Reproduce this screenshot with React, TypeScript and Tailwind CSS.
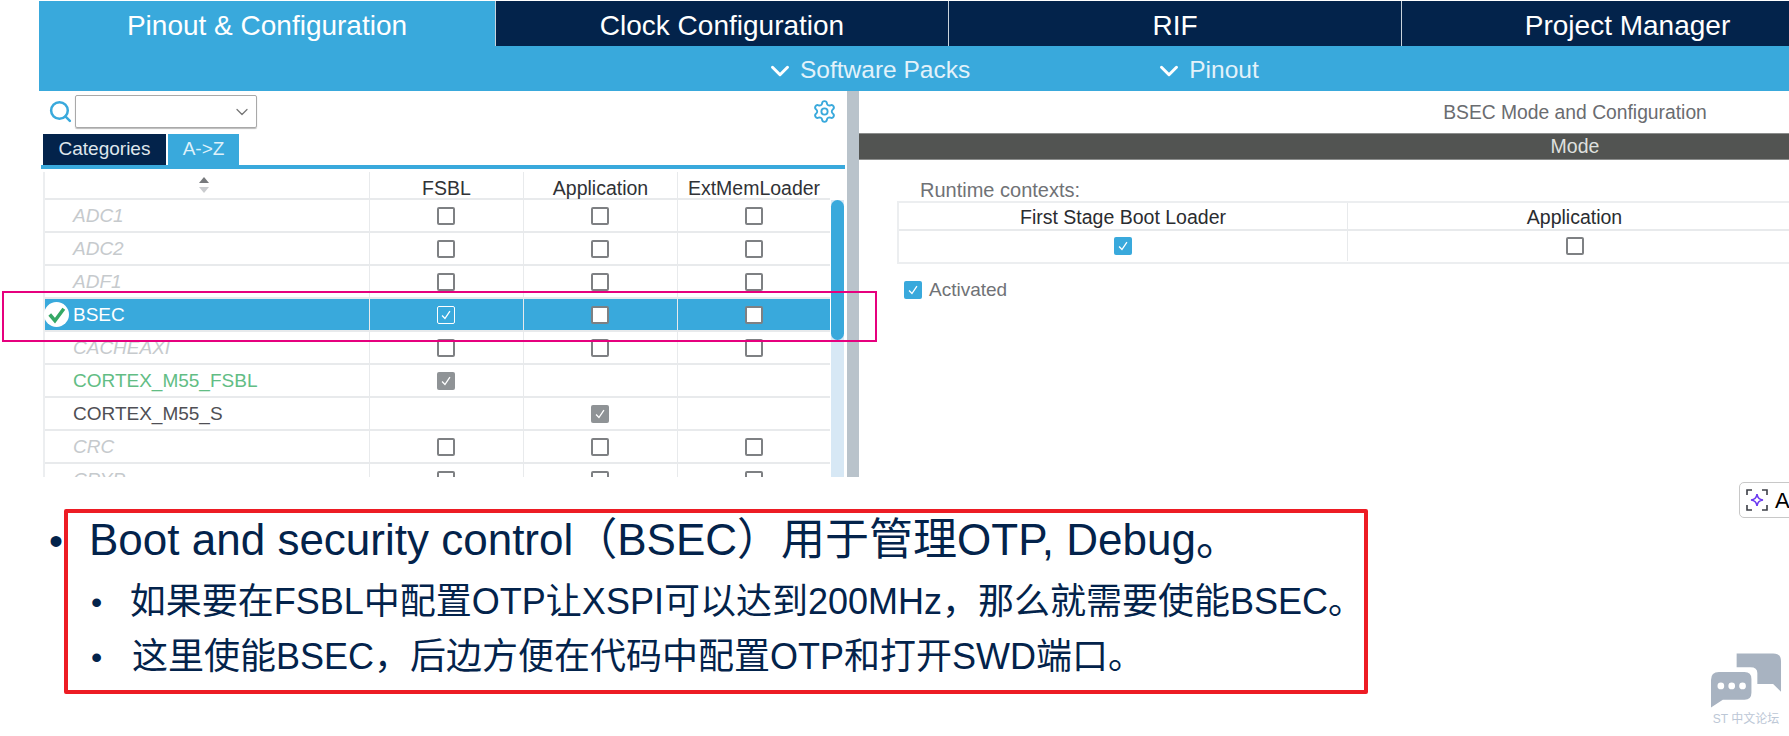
import { ChevronDown, Search, Settings } from "lucide-react";

const SANS = "font-['Liberation_Sans','Noto_Sans_CJK_SC',sans-serif]";

type Box = "off" | "on" | "locked" | null;

const rows: { name: string; tone: string; cells: Box[] }[] = [
  { name: "ADC1", tone: "italic text-[#c6cacd]", cells: ["off", "off", "off"] },
  { name: "ADC2", tone: "italic text-[#c6cacd]", cells: ["off", "off", "off"] },
  { name: "ADF1", tone: "italic text-[#c6cacd]", cells: ["off", "off", "off"] },
  { name: "BSEC", tone: "text-white", cells: ["on", "off", "off"] },
  { name: "CACHEAXI", tone: "italic text-[#c6cacd]", cells: ["off", "off", "off"] },
  { name: "CORTEX_M55_FSBL", tone: "text-[#62bd84]", cells: ["locked", null, null] },
  { name: "CORTEX_M55_S", tone: "text-[#4f4f55]", cells: [null, "locked", null] },
  { name: "CRC", tone: "italic text-[#c6cacd]", cells: ["off", "off", "off"] },
  { name: "CRYP", tone: "italic text-[#c6cacd]", cells: ["off", "off", "off"] },
];

function Tick() {
  return (
    <svg viewBox="0 0 16 16" className="w-[14px] h-[14px]" fill="none" stroke="white" strokeWidth="1.5">
      <path d="M3.5 8.5 L6.8 12 L12.5 3.5" />
    </svg>
  );
}

function CheckBox({ kind, selected }: { kind: Box; selected?: boolean }) {
  if (!kind) return null;
  if (kind === "off") {
    return <div className="w-[18px] h-[18px] rounded-[2px] border-2 border-[#7e8083] bg-white" />;
  }
  if (kind === "locked") {
    return (
      <div className="w-[18px] h-[18px] rounded-[2px] bg-[#8f9396] flex items-center justify-center">
        <Tick />
      </div>
    );
  }
  return (
    <div className={`w-[18px] h-[18px] rounded-[2px] bg-[#39a9dc] flex items-center justify-center ${selected ? "border border-white" : ""}`}>
      <Tick />
    </div>
  );
}

function HeaderTab({ label, active, width }: { label: string; active?: boolean; width: string }) {
  return (
    <div
      className={`${width} shrink-0 h-[45px] pt-[4px] flex items-center justify-center text-[28px] text-white ${
        active ? "bg-[#39a9dc]" : "bg-[#03234b] border-l border-[#c9d3dc]"
      }`}
    >
      {label}
    </div>
  );
}

function Pack({ label, className }: { label: string; className: string }) {
  return (
    <div className={`flex items-center gap-[5px] text-[24.5px] text-[#e3f2fa] ${className}`}>
      <ChevronDown size={30} strokeWidth={2.4} className="text-white" />
      {label}
    </div>
  );
}

export default function App() {
  return (
    <div className={`relative w-[1789px] h-[736px] overflow-hidden bg-white ${SANS}`}>
      {/* CubeMX capture */}
      <div className="ml-[39px] mt-px">
        <div className="flex">
          <HeaderTab label="Pinout & Configuration" active width="w-[456px]" />
          <HeaderTab label="Clock Configuration" width="w-[453px]" />
          <HeaderTab label="RIF" width="w-[453px]" />
          <HeaderTab label="Project Manager" width="w-[452px]" />
        </div>
        <div className="h-[45px] pt-[4px] bg-[#39a9dc] flex items-center">
          <Pack label="Software Packs" className="ml-[726px]" />
          <Pack label="Pinout" className="ml-[184px]" />
        </div>

        <div className="flex h-[386px] overflow-hidden">
          {/* Peripheral list */}
          <div className="w-[808px] shrink-0">
            <div className="flex items-center h-[43px] pb-[2px] pl-[9px] pr-[10px]">
              <Search size={25} strokeWidth={2.4} className="text-[#39a9dc]" />
              <div className="ml-[2px] w-[182px] h-[33px] border border-[#a9a9a9] rounded-[2px] shadow-[0_1px_1px_#bbb] flex items-center justify-end pr-[4px]">
                <ChevronDown size={20} strokeWidth={1.5} className="text-[#777]" />
              </div>
              <Settings size={25} strokeWidth={1.8} className="ml-auto text-[#39a9dc]" />
            </div>

            <div className="flex pl-[4px] h-[31px] gap-[2px]">
              <div className="w-[123px] flex items-center justify-center bg-[#03234b] text-[19px] text-[#dfe6ec]">Categories</div>
              <div className="w-[71px] flex items-center justify-center bg-[#39a9dc] text-[19px] text-[#dff1fa]">A-&gt;Z</div>
            </div>
            <div className="ml-[2px] w-[804px] h-[4px] bg-[#39a9dc]" />

            <div className="relative ml-[4px] mt-[3px] w-[801px]">
              <div className="w-[787px] border-l-2 border-[#eceef0]">
                <div className="grid grid-cols-[324px_154px_154px_153px] h-[28px] border-b-2 border-[#e8eaec] text-[19.5px] text-[#303236]">
                  <div className="flex justify-center pt-[4px] pr-[6px]">
                    <svg viewBox="0 0 12 18" className="w-[12px] h-[18px]">
                      <path d="M6 1 L11 7 H1 Z" fill="#77797c" />
                      <path d="M6 17 L11 11 H1 Z" fill="#c9cbce" />
                    </svg>
                  </div>
                  <div className="flex items-center justify-center pt-[2px] border-l border-[#e8eaec]">FSBL</div>
                  <div className="flex items-center justify-center pt-[2px] border-l border-[#e8eaec]">Application</div>
                  <div className="flex items-center justify-center pt-[2px] border-l border-[#e8eaec]">ExtMemLoader</div>
                </div>
                {rows.map((row) => {
                  const selected = row.name === "BSEC";
                  return (
                    <div
                      key={row.name}
                      className={`grid grid-cols-[324px_154px_154px_153px] h-[33px] border-b-2 border-[#e8eaec] text-[19px] ${
                        selected ? "bg-[#39a9dc]" : ""
                      }`}
                    >
                      <div className={`relative flex items-center pl-[28px] pt-[1px] ${row.tone}`}>
                        {selected && (
                          <svg viewBox="0 0 24 24" className="absolute -left-[1px] top-[3px] w-[25px] h-[25px]">
                            <circle cx="12" cy="12" r="12" fill="white" />
                            <path d="M5.5 12 L10.5 18 L19 6.5" fill="none" stroke="#35a865" strokeWidth="3.4" />
                          </svg>
                        )}
                        {row.name}
                      </div>
                      {row.cells.map((cell, i) => (
                        <div key={i} className="flex items-center justify-center pr-[1px] border-l border-[#e8eaec]">
                          <CheckBox kind={cell} selected={selected} />
                        </div>
                      ))}
                    </div>
                  );
                })}
              </div>
              {/* scrollbar */}
              <div className="absolute top-[28px] left-[788px] w-[13px] h-[280px] bg-[#d7e8f5]">
                <div className="h-[140px] rounded-full bg-[#39a9dc]" />
              </div>
            </div>
          </div>

          <div className="w-[12px] shrink-0 bg-[#b9c3cb]" />

          {/* Mode panel runs on past the window's right edge */}
          <div className="w-[1432px] shrink-0">
            <div className="h-[42px] flex items-center justify-center pt-[2px] text-[19.3px] text-[#6a6c70]">BSEC Mode and Configuration</div>
            <div className="h-[27px] bg-[#525452] border-y border-[#8b8d8c] flex items-center justify-center text-[19.5px] text-[#dfe0df]">Mode</div>
            <div className="pl-[38px] pt-[19px]">
              <div className="pl-[23px] text-[20px] leading-[22px] text-[#707276]">Runtime contexts:</div>
              <div className="w-[906px] border-2 border-[#eceef0]">
                <div className="grid grid-cols-[448px_1fr] h-[28px] border-b-2 border-[#e8eaec] text-[19.5px] text-[#2a2c30]">
                  <div className="flex items-center justify-center">First Stage Boot Loader</div>
                  <div className="flex items-center justify-center border-l border-[#e8eaec]">Application</div>
                </div>
                <div className="grid grid-cols-[448px_1fr] h-[31px] pb-[1px]">
                  <div className="flex items-center justify-center"><CheckBox kind="on" /></div>
                  <div className="flex items-center justify-center border-l border-[#e8eaec]"><CheckBox kind="off" /></div>
                </div>
              </div>
              <div className="mt-[12px] ml-[7px] flex items-center gap-[7px] text-[19px] text-[#707276]">
                <CheckBox kind="on" />
                Activated
              </div>
            </div>
          </div>
        </div>
      </div>

      {/* Highlight round the BSEC row */}
      <div className="absolute left-[2px] top-[291px] w-[875px] h-[51px] border-2 border-[#e6007e]" />

      {/* Slide text */}
      <div className="flex pl-[49px] pt-[32px] text-[#03234b]">
        <div className="w-[15px] pt-[5px] text-[40px] leading-[54px]">•</div>
        <div className="w-[1304px] h-[185px] border-4 border-[#ed1c24] rounded-[2px] pl-[21px]">
          <div className="text-[44px] leading-[54px] whitespace-nowrap">Boot and security control（BSEC）用于管理OTP, Debug。</div>
          <div className="mt-[7px] flex items-center h-[55px] text-[36px] whitespace-nowrap">
            <span className="w-[43px] pl-[2px] text-[32px]">•</span>如果要在FSBL中配置OTP让XSPI可以达到200MHz，那么就需要使能BSEC。
          </div>
          <div className="flex items-center h-[57px] -mt-[1px] text-[36px] whitespace-nowrap">
            <span className="w-[43px] pl-[2px] text-[32px]">•</span>这里使能BSEC，后边方便在代码中配置OTP和打开SWD端口。
          </div>
        </div>
      </div>

      {/* Floating page widgets */}
      <div className="absolute left-[1739px] top-[482px] w-[60px] h-[36px] bg-white border border-[#c8c8c8] rounded-[5px] flex items-center pl-[6px] gap-[7px] text-[22px] text-black">
        <svg viewBox="0 0 22 22" className="w-[22px] h-[22px] shrink-0" fill="none">
          <path d="M1 6V1H6 M16 1H21V6 M21 16V21H16 M6 21H1V16" stroke="#3c3f46" strokeWidth="1.6" />
          <path d="M11 5 Q11.6 10.4 17 11 Q11.6 11.6 11 17 Q10.4 11.6 5 11 Q10.4 10.4 11 5 Z" stroke="#6d3cf0" strokeWidth="1.6" />
        </svg>
        A
      </div>
      <div className="absolute left-[1710px] top-[653px] w-[72px] flex flex-col items-center">
        <svg viewBox="0 0 72 55" className="w-[71px] h-[55px]" fill="#a8b3c1">
          <path d="M26 0H63Q71 0 71 8V39L63 31H47V20Q47 14 40 14H26Z" />
          <path d="M8 19H34Q41 19 41 26V40Q41 47 34 47H12L0 55V27Q0 19 8 19Z" />
          <circle cx="10" cy="33" r="3.4" fill="white" />
          <circle cx="21" cy="33" r="3.4" fill="white" />
          <circle cx="32" cy="33" r="3.4" fill="white" />
        </svg>
        <div className="mt-[3px] text-[12px] leading-[16px] text-[#bcc7d6] whitespace-nowrap">ST 中文论坛</div>
      </div>
    </div>
  );
}
